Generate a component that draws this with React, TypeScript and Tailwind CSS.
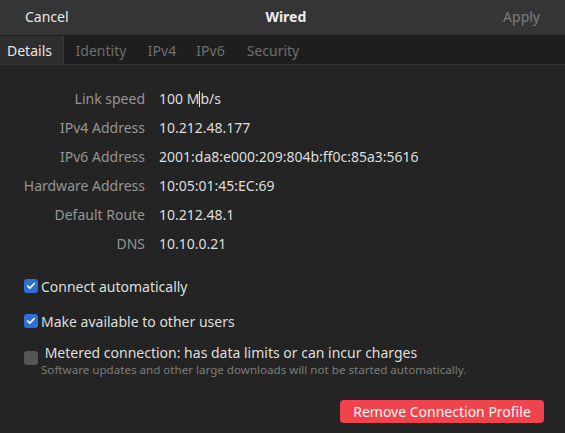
import { Check } from 'lucide-react';

const rows = [
  { label: 'Link speed', value: 'speed' },
  { label: 'IPv4 Address', value: '10.212.48.177' },
  { label: 'IPv6 Address', value: '2001:da8:e000:209:804b:ff0c:85a3:5616' },
  { label: 'Hardware Address', value: '10:05:01:45:EC:69' },
  { label: 'Default Route', value: '10.212.48.1' },
  { label: 'DNS', value: '10.10.0.21' },
];

const tabs = [
  { name: 'Details', cls: 'w-[64px] pl-[7px] border-r border-[#3a3a3a] bg-[#2e2e2e] text-[#e6e6e6]' },
  { name: 'Identity', cls: 'w-[74px] justify-center text-[#6f6f6f]' },
  { name: 'IPv4', cls: 'w-[48px] justify-center text-[#6f6f6f]' },
  { name: 'IPv6', cls: 'w-[49px] justify-center text-[#6f6f6f]' },
  { name: 'Security', cls: 'w-[76px] justify-center text-[#6f6f6f]' },
];

function Box({ checked }: { checked: boolean }) {
  return checked ? (
    <span className="flex h-[14px] w-[14px] shrink-0 items-center justify-center rounded-[3px] bg-[#2f6fd6]">
      <Check size={10} strokeWidth={4} className="text-white" />
    </span>
  ) : (
    <span className="mt-[8px] h-[14px] w-[14px] shrink-0 rounded-[3px] bg-[#565656]" />
  );
}

export default function App() {
  return (
    <div className="flex h-[433px] w-[565px] flex-col bg-[#242424] text-[14px] text-[#dedede]" style={{ fontFamily: '"Noto Sans", sans-serif' }}>
      <header className="flex h-[36px] items-center justify-between border-b border-[#1a1a1a] bg-[#353535] px-[25px] pb-[3px]">
        <span className="text-[#e8e8e8]">Cancel</span>
        <span className="font-bold text-[#eeeeee]">Wired</span>
        <span className="text-[#7d7d7d]">Apply</span>
      </header>

      <nav className="flex h-[29px] border-b border-[#363636] bg-[#1e1e1e]">
        {tabs.map((tab) => (
          <span key={tab.name} className={`flex items-center ${tab.cls}`}>
            {tab.name}
          </span>
        ))}
      </nav>

      <div className="mt-[23px] flex flex-col gap-[9px]">
        {rows.map((row) => (
          <div key={row.label} className="flex h-[20px] items-center">
            <span className="w-[145px] text-right text-[#959595]">{row.label}</span>
            <span className="ml-[14px]">
              {row.value === 'speed' ? (
                <>
                  100 M<span className="inline-block h-[16px] w-px translate-y-[3px] bg-[#dedede]" />b/s
                </>
              ) : (
                row.value
              )}
            </span>
          </div>
        ))}
      </div>

      <div className="mt-[23px] flex flex-col px-[24px]">
        <label className="flex h-[20px] items-center gap-[3px]">
          <Box checked />
          <span>Connect automatically</span>
        </label>
        <label className="mt-[15px] flex h-[20px] items-center gap-[3px]">
          <Box checked />
          <span>Make available to other users</span>
        </label>
        <div className="mt-[12px] flex items-start gap-[3px]">
          <Box checked={false} />
          <div className="flex flex-col">
            <span className="leading-[19px]">&nbsp;Metered connection: has data limits or can incur charges</span>
            <span className="text-[11.6px] leading-[16px] text-[#7c7c7c]">Software updates and other large downloads will not be started automatically.</span>
          </div>
        </div>
      </div>

      <div className="mt-auto flex justify-end px-[21px] pb-[10px]">
        <button className="h-[23px] w-[204px] rounded-[4px] bg-[#f0444c] text-[#f6f6f6]">Remove Connection Profile</button>
      </div>
    </div>
  );
}
